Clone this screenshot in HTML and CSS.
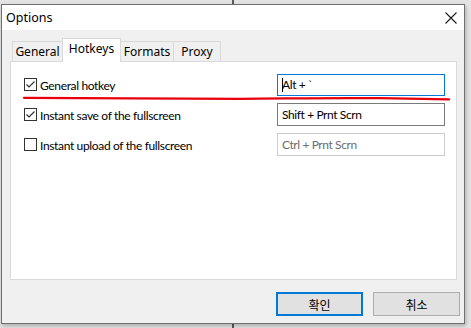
FILE: index.html
```html
<!DOCTYPE html>
<html>
<head lang="en">
    <meta charset="UTF-8">
    <title>Options</title>
    <link rel="stylesheet" href="styles.css">
</head>
<body>
<div id="dialog">
    <div id="titlebar">
        <span class="title">Options</span>
        <svg class="close" width="12" height="12" viewBox="0 0 12 12">
            <path d="M0.5 0.5 L11.5 11.5 M11.5 0.5 L0.5 11.5" stroke="#1a1a1a" stroke-width="1.1" fill="none"/>
        </svg>
    </div>
    <div id="main">
        <ul id="tabs">
            <li class="tab t-general">General</li>
            <li class="tab t-hotkeys selected">Hotkeys</li>
            <li class="tab t-formats">Formats</li>
            <li class="tab t-proxy">Proxy</li>
        </ul>
        <div id="panel">
            <div class="row">
                <label class="check">
                    <svg class="box" width="13" height="13" viewBox="0 0 13 13">
                        <rect x="0.5" y="0.5" width="12" height="12" fill="#fff" stroke="#333"/>
                        <path d="M2.5 6.5 L5 9 L10.5 3.5" stroke="#333" stroke-width="1.2" fill="none"/>
                    </svg>
                    <span>General hotkey</span>
                </label>
                <div class="field focus"><span class="caret"></span>Alt + `</div>
            </div>
            <div class="row">
                <label class="check">
                    <svg class="box" width="13" height="13" viewBox="0 0 13 13">
                        <rect x="0.5" y="0.5" width="12" height="12" fill="#fff" stroke="#333"/>
                        <path d="M2.5 6.5 L5 9 L10.5 3.5" stroke="#333" stroke-width="1.2" fill="none"/>
                    </svg>
                    <span>Instant save of the fullscreen</span>
                </label>
                <div class="field">Shift + Prnt Scrn</div>
            </div>
            <div class="row">
                <label class="check">
                    <svg class="box" width="13" height="13" viewBox="0 0 13 13">
                        <rect x="0.5" y="0.5" width="12" height="12" fill="#fff" stroke="#333"/>
                    </svg>
                    <span>Instant upload of the fullscreen</span>
                </label>
                <div class="field off">Ctrl + Prnt Scrn</div>
            </div>
        </div>
        <div id="buttons">
            <button class="btn default">확인</button>
            <button class="btn">취소</button>
        </div>
    </div>
</div>
<svg id="mark" width="471" height="328" viewBox="0 0 471 328">
    <path d="M24 97.8 C 90 98.6, 160 99, 240 98.8 C 300 98.4, 330 97.8, 380 98.2 C 410 98.6, 435 99.2, 449 99.4" stroke="#e8000b" stroke-width="2.2" fill="none" stroke-linecap="round"/>
</svg>
</body>
</html>
```

FILE: styles.css
```css
*{
    margin: 0;
    padding: 0;
    box-sizing: border-box;
}
ul{
    list-style: none;
}
body{
    width: 471px;
    height: 328px;
    overflow: hidden;
    position: relative;
    background: linear-gradient(to right, #e4e4e4 232px, #5a5a5a 232px, #5a5a5a 234px, #e4e4e4 234px);
    font-family: "Noto Sans", "Noto Sans CJK KR", sans-serif;
    font-size: 12px;
    color: #000;
}
#dialog{
    margin: 4px 0 0 1px;
    width: 464px;
    height: 320px;
    border: 1px solid #707070;
    background: #f0f0f0;
    box-shadow: 1px 2px 4px rgba(0,0,0,0.25);
    display: flex;
    flex-direction: column;
}
#titlebar{
    height: 26px;
    background: #fff;
    display: flex;
    align-items: center;
    justify-content: space-between;
    padding: 0 7px 0 4px;
}
#titlebar .title{
    font-size: 12.5px;
    margin-top: -1px;
}
#titlebar .close{
    margin-top: 1px;
}
#main{
    flex: 1;
    padding: 8px 7px 7px 8px;
    display: flex;
    flex-direction: column;
}
#tabs{
    display: flex;
    align-items: flex-end;
    height: 23px;
    padding-left: 2px;
}
#tabs .tab{
    height: 20px;
    line-height: 19px;
    border: 1px solid #d9d9d9;
    border-bottom: none;
    background: #f0f0f0;
    text-align: center;
    margin-left: -1px;
}
#tabs .t-general{ width: 51px; margin-left: 0; }
#tabs .t-hotkeys{ width: 59px; }
#tabs .t-formats{ width: 54px; }
#tabs .t-proxy{ width: 48px; }
#tabs .selected{
    height: 24px;
    line-height: 20px;
    background: #fff;
    position: relative;
    z-index: 2;
    margin-bottom: -1px;
}
#panel{
    height: 219px;
    width: 447px;
    background: #fff;
    border: 1px solid #d9d9d9;
    padding: 11px 11px 0 13px;
    display: flex;
    flex-direction: column;
    gap: 7px;
    font-family: Lato, "Noto Sans", sans-serif;
    font-size: 12px;
    letter-spacing: -0.35px;
}
.row{
    display: flex;
    align-items: center;
    justify-content: space-between;
    height: 23px;
}
.check{
    display: flex;
    align-items: center;
    gap: 3px;
}
.check span{
    margin-top: 1px;
}
.check .box{
    flex: none;
}
.field{
    width: 168px;
    height: 23px;
    border: 1px solid #7a7a7a;
    padding: 0 4px;
    line-height: 20px;
    display: flex;
    align-items: center;
    letter-spacing: -0.4px;
}
.field.focus{
    height: 22px;
    border-color: #0078d7;
}
.field.off{
    border-color: #cccccc;
    color: #6d6d6d;
}
.caret{
    width: 1px;
    height: 14px;
    background: #000;
    margin-right: -1px;
}
#buttons{
    display: flex;
    justify-content: flex-end;
    gap: 10px;
    margin-top: 12px;
    margin-right: -3px;
}
.btn{
    width: 87px;
    height: 24px;
    font-family: "Noto Sans CJK KR", "Noto Sans", sans-serif;
    font-size: 12px;
    background: #e1e1e1;
    border: 1px solid #adadad;
    color: #000;
}
.btn.default{
    border: 2px solid #0078d7;
}
#mark{
    position: absolute;
    left: 0;
    top: 0;
    pointer-events: none;
}
```
